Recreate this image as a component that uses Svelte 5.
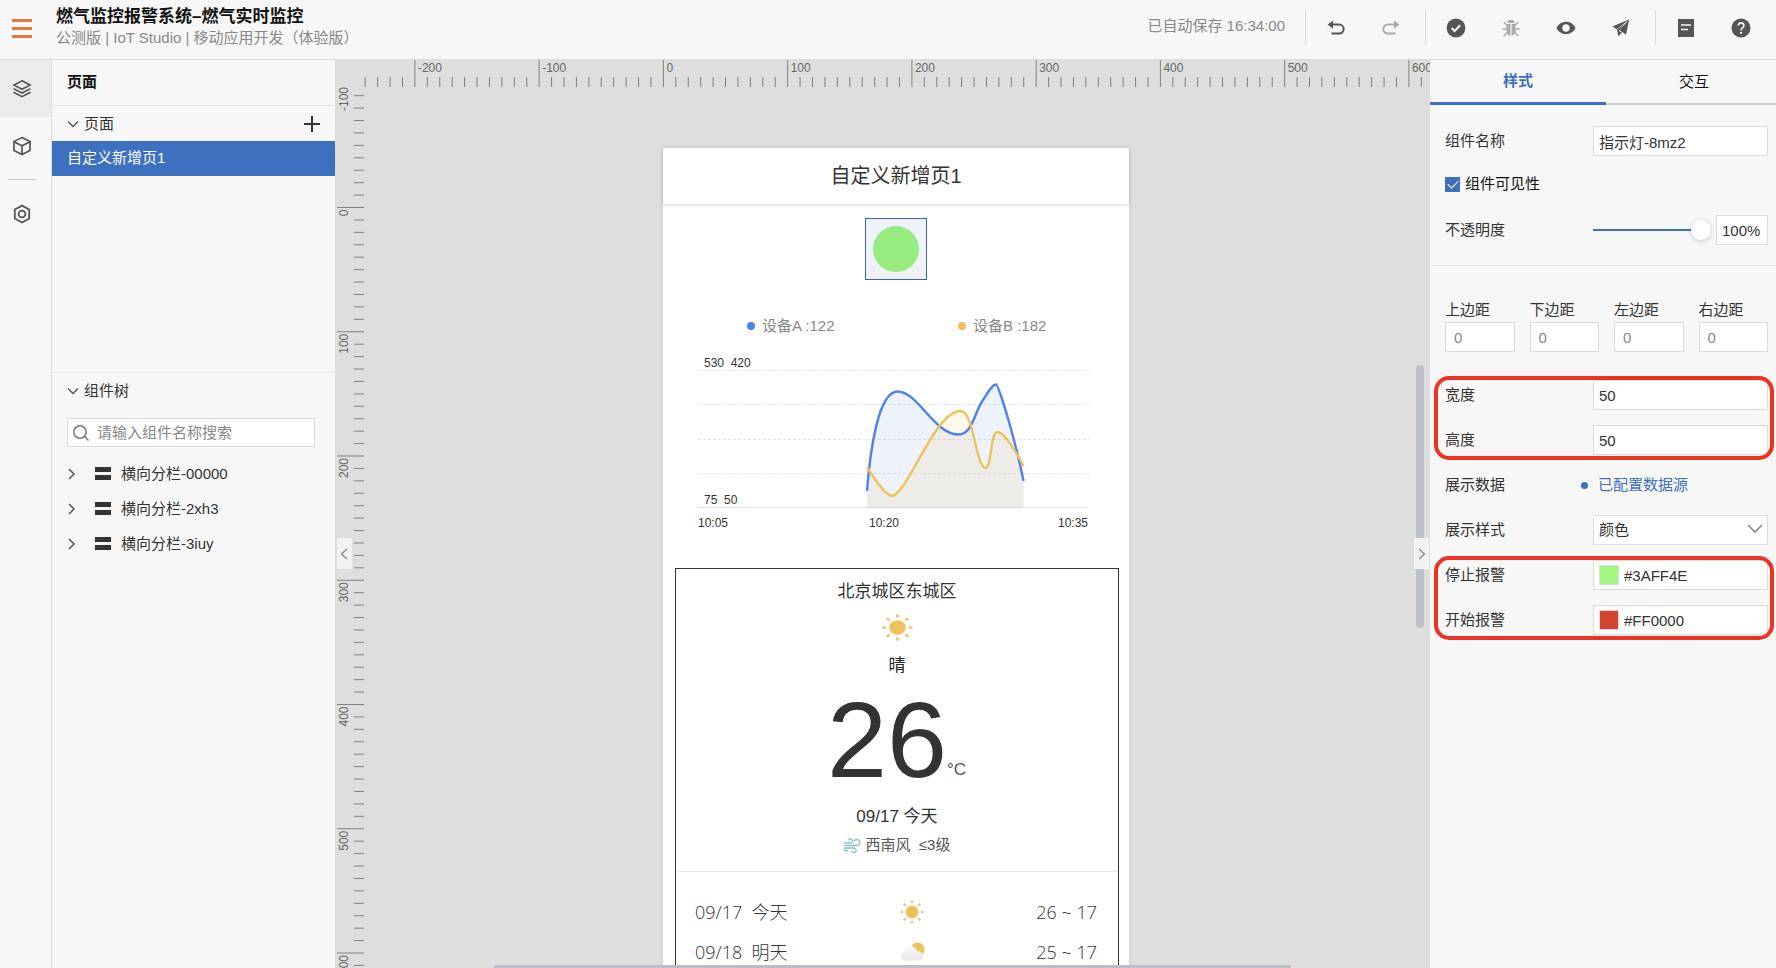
<script>
  const tree = ['横向分栏-00000', '横向分栏-2xh3', '横向分栏-3iuy'];
  const margins = ['上边距', '下边距', '左边距', '右边距'];
  const forecast = [
    { date: '09/17', day: '今天', icon: 'sun', range: '26 ~ 17' },
    { date: '09/18', day: '明天', icon: 'cloud', range: '25 ~ 17' }
  ];

  const unit = 124.25;
  function ruler(from, to, origin) {
    const ticks = [];
    for (let i = from; i <= to; i++) {
      ticks.push({ at: origin + (i * unit) / 10, major: i % 10 === 0, label: i * 10 });
    }
    return ticks;
  }
  const across = ruler(-24, 80, 298.4);
  const down = ruler(-9, 90, 147.5);
  const rays = [0, 45, 90, 135, 180, 225, 270, 315];

  let name = $state('指示灯-8mz2');
  let visible = $state(true);
  let opacity = $state(100);
  let width = $state('50');
  let height = $state('50');
  let stopColor = $state('#3AFF4E');
  let startColor = $state('#FF0000');
</script>

{#snippet sun(w, h)}
  <svg width={w} height={h} viewBox="0 0 32 32" preserveAspectRatio="none" aria-hidden="true">
    <circle cx="16" cy="16" r="8.6" fill="#edc25b" />
    {#each rays as r}
      <path d="M16 .5v3.6" stroke="#edc25b" stroke-width="2.8" transform={`rotate(${r} 16 16)`} />
    {/each}
  </svg>
{/snippet}

{#snippet chevron(d)}
  <svg class="chev" width="12" height="12" viewBox="0 0 12 12" aria-hidden="true"><path {d} fill="none" stroke="#555" stroke-width="1.5" /></svg>
{/snippet}

<div class="app">
  <header>
    <button class="menu" aria-label="菜单"><i></i><i></i><i></i></button>
    <div class="titles">
      <h1>燃气监控报警系统–燃气实时监控</h1>
      <p>公测版 | IoT Studio | 移动应用开发（体验版）</p>
    </div>
    <span class="saved">已自动保存 16:34:00</span>
    <div class="tools">
      <button aria-label="撤销"><svg width="20" height="20" viewBox="0 0 20 20"><path d="M6 6.6h7.2a4.3 4.3 0 0 1 0 8.9H5.4" fill="none" stroke="#555" stroke-width="2" /><path d="M7 2.5v8.2L1.6 6.6z" fill="#555" /></svg></button>
      <button aria-label="重做"><svg width="20" height="20" viewBox="0 0 20 20"><path d="M14 6.6H6.8a4.3 4.3 0 0 0 0 8.9h7.8" fill="none" stroke="#a9a9a9" stroke-width="2" /><path d="M13 2.5v8.2l5.4-4.1z" fill="#a9a9a9" /></svg></button>
    </div>
    <div class="tools">
      <button aria-label="检查"><svg width="20" height="20" viewBox="0 0 20 20"><circle cx="10" cy="10" r="9.4" fill="#555" /><path d="m5.6 10 3 3 5.6-5.8" fill="none" stroke="#f7f7f7" stroke-width="2" /></svg></button>
      <button aria-label="调试"><svg width="20" height="20" viewBox="0 0 20 20" fill="#a9a9a9"><path d="M6.5 5a3.5 3.2 0 0 1 7 0zM5.5 6H9.4v11.8C6.5 17 5.3 15 5.3 12zM10.6 6h3.9l.2 6c0 3-1.2 5-4.1 5.800z" /><path d="M2.800 4.200 5.800 7.200M17.200 4.200l-3 3M1.300 11H5.500M14.500 11h4.200M2.800 18l3.200-3.200M17.200 18 14 14.800" stroke="#a9a9a9" stroke-width="1.500" /></svg></button>
      <button aria-label="预览"><svg width="20" height="20" viewBox="0 0 20 20"><path d="M.5 10C4.500 1.800 15.500 1.800 19.500 10 15.500 18.200 4.500 18.200.5 10z" fill="#555" /><circle cx="10" cy="10" r="3.700" fill="#f7f7f7" /></svg></button>
      <button aria-label="发布"><svg width="20" height="20" viewBox="0 0 20 20"><path d="M18.300 1.300 1.500 8.500l4.300 2.700zM18.300 1.300 8.300 12.200l6.700 4.300z" fill="#555" /><path d="M6 11.500 14 5.500 8 12.500 11 14.800 7.300 18.300z" fill="#555" /><path d="m8.100 12.700 2 1.300" stroke="#f7f7f7" stroke-width="1" /></svg></button>
    </div>
    <div class="tools">
      <button aria-label="文档"><svg width="20" height="20" viewBox="0 0 20 20"><path d="M2 1h16v18H2z" fill="#555" /><path d="M5 7h10M5 11.500h7" stroke="#f7f7f7" stroke-width="1.600" /></svg></button>
      <button aria-label="帮助"><svg width="20" height="20" viewBox="0 0 20 20"><circle cx="10" cy="10" r="9.500" fill="#555" /><path d="M7.300 7.600C7.300 3.800 12.900 4 12.900 7.500 12.900 9.600 10.100 9.800 10.100 12.400" fill="none" stroke="#f7f7f7" stroke-width="1.700" /><circle cx="10.100" cy="14.900" r="1.100" fill="#f7f7f7" /></svg></button>
    </div>
  </header>

  <div class="body">
    <nav class="rail">
      <button class="on" aria-label="图层"><svg width="20" height="20" viewBox="0 0 20 20" fill="none" stroke="#555" stroke-width="1.600"><path d="M10 1.800 18 6.100 10 10.300 2 6.100zM1.500 9.600 10 14l8.500-4.400M1.500 13.200 10 17.700l8.500-4.500" /></svg></button>
      <button aria-label="组件"><svg width="20" height="20" viewBox="0 0 20 20" fill="none" stroke="#555" stroke-width="1.700"><path d="M10 1.600 18 5.500V14.500L10 18.500 2 14.500V5.500zM2 5.700l8 4 8-4M10 9.700v8.600" /></svg></button>
      <hr />
      <button aria-label="设置"><svg width="20" height="20" viewBox="0 0 20 20" fill="none" stroke="#555" stroke-width="1.800"><path d="M10 1.600 17.200 5.500V14.500L10 18.500 2.800 14.500V5.500z" /><circle cx="10" cy="10" r="3.400" /></svg></button>
    </nav>

    <aside class="side">
      <h2>页面</h2>
      <section class="pages">
        <div class="sub">
          {@render chevron('M1 3.500l5 5 5-5')}<span>页面</span>
          <button class="add" aria-label="新增页面"><svg width="16" height="16" viewBox="0 0 16 16"><path d="M8 0v16M0 8h16" stroke="#333" stroke-width="2" /></svg></button>
        </div>
        <a class="current" href="#page">自定义新增页1</a>
      </section>
      <section class="tree">
        <div class="sub">{@render chevron('M1 3.500l5 5 5-5')}<span>组件树</span></div>
        <label class="search">
          <svg width="18" height="18" viewBox="0 0 18 18" fill="none" stroke="#777" stroke-width="1.500"><circle cx="8" cy="8" r="6.200" /><path d="m12.500 12.500 4 4" /></svg>
          <input type="text" placeholder="请输入组件名称搜索" aria-label="搜索组件" />
        </label>
        <ul>
          {#each tree as item}
            <li>{@render chevron('M3 1l5 5-5 5')}<i class="bars"></i><span>{item}</span></li>
          {/each}
        </ul>
      </section>
    </aside>

    <main>
      <svg class="ruler-x" aria-hidden="true">
        {#each across as t}
          <path d={`M${t.at} ${t.major ? 0 : 17}V27`} />
          {#if t.major}<text x={t.at + 3} y="12">{t.label}</text>{/if}
        {/each}
      </svg>
      <svg class="ruler-y" aria-hidden="true">
        {#each down as t}
          <path d={`M${t.major ? 2 : 19} ${t.at}H29`} />
          {#if t.major}<text transform={`translate(13 ${t.at + 2}) rotate(-90)`} text-anchor="end">{t.label}</text>{/if}
        {/each}
        <text transform="translate(13 51) rotate(-90)">-100</text>
      </svg>

      <div class="stage">
        <article class="phone" id="page">
          <h3>自定义新增页1</h3>
          <div class="lamp"><i></i></div>
          <div class="legend">
            <span class="a">设备A :122</span><span class="b">设备B :182</span>
          </div>
          <svg class="chart" viewBox="0 0 466 190" role="img" aria-label="设备A 设备B">
            <path d="M35 30.500H426M35 64.500H426M35 99.500H426M35 133.500H426" stroke="#e6e6e6" stroke-dasharray="3 2" />
            <path d="M35 167.500H425" stroke="#e0e0e0" />
            <path d="M204 151C207 112 215 51.500 234.500 51.500 255 51.500 271 94.500 295.500 94.500 309 94.500 311 74 319 61.500 324 54 329 44.500 333 44.500 336 44.500 354 107 360.500 141V167.500H204z" fill="#5080ec" fill-opacity=".1" />
            <path d="M204 127C212 140 223 156 229.500 156 246 151 272 71 297.500 71 311 71 313 128 322.500 128 329 128 327 92 334.500 92 341 92 354 113 360.500 126V167.500H204z" fill="#edc25b" fill-opacity=".12" />
            <path d="M204 151C207 112 215 51.500 234.500 51.500 255 51.500 271 94.500 295.500 94.500 309 94.500 311 74 319 61.500 324 54 329 44.500 333 44.500 336 44.500 354 107 360.500 141" fill="none" stroke="#5080ec" stroke-width="2.400" />
            <path d="M204 127C212 140 223 156 229.500 156 246 151 272 71 297.500 71 311 71 313 128 322.500 128 329 128 327 92 334.500 92 341 92 354 113 360.500 126" fill="none" stroke="#edc25b" stroke-width="2.400" />
            <text x="41" y="27">530&nbsp; 420</text>
            <text x="41" y="164">75&nbsp; 50</text>
            <text x="35" y="187">10:05</text>
            <text x="206" y="187">10:20</text>
            <text x="425" y="187" text-anchor="end">10:35</text>
          </svg>

          <section class="weather">
            <div class="now">
              <p class="city">北京城区东城区</p>
              {@render sun(31, 27)}
              <p class="sky">晴</p>
              <p class="temp">26<small>°C</small></p>
              <p class="today">09/17 今天</p>
              <p class="wind">
                <svg width="17" height="15" viewBox="0 0 17 15" fill="none" stroke="#8dbfc8" stroke-width="1.300"><path d="M0 5h6.500a2 2 0 1 0-2-2.500M0 7.500h13a3 3 0 1 0-3-4M0 10h10a2.300 2.300 0 1 1-2.300 3M0 12.500h4" /></svg>
                西南风&nbsp; ≤3级
              </p>
            </div>
            {#each forecast as f}
              <div class="day">
                <span>{f.date}&nbsp; {f.day}</span>
                {#if f.icon === 'sun'}
                  {@render sun(24, 24)}
                {:else}
                  <svg width="26" height="20" viewBox="0 0 26 20" aria-hidden="true">
                    <defs><linearGradient id="cloud" x2="0" y2="1"><stop stop-color="#fafafa" /><stop offset="1" stop-color="#e8e8e8" /></linearGradient></defs>
                    <circle cx="18.500" cy="7.500" r="7" fill="#edc25b" />
                    <path d="M5.500 18.500a5 5 0 0 1-.5-9.500C6.500 2.500 16 2 18 9c8 .5 8 9.500 1.500 9.500z" fill="url(#cloud)" />
                  </svg>
                {/if}
                <span>{f.range}</span>
              </div>
            {/each}
          </section>
        </article>
      </div>
      <i class="bar-x"></i><i class="bar-y"></i>
      <button class="fold left" aria-label="收起左栏"><svg width="9" height="14" viewBox="0 0 9 14"><path d="M7 2 1.500 7 7 12" fill="none" stroke="#888" stroke-width="1.300" /></svg></button>
      <button class="fold right" aria-label="收起右栏"><svg width="9" height="14" viewBox="0 0 9 14"><path d="M2 2 7.500 7 2 12" fill="none" stroke="#888" stroke-width="1.300" /></svg></button>
    </main>

    <aside class="props">
      <div class="tabs" role="tablist">
        <button class="on" role="tab" aria-selected="true">样式</button>
        <button role="tab" aria-selected="false">交互</button>
      </div>
      <div class="basic">
        <div class="row"><label for="name">组件名称</label><input id="name" type="text" bind:value={name} /></div>
        <label class="check"><input type="checkbox" bind:checked={visible} />组件可见性</label>
        <div class="row">
          <label for="opacity">不透明度</label>
          <div class="slide">
            <input id="opacity" type="range" min="0" max="100" bind:value={opacity} />
            <input type="text" value={`${opacity}%`} aria-label="不透明度数值" />
          </div>
        </div>
      </div>
      <div class="detail">
        <div class="margins">
          {#each margins as m}
            <label>{m}<input type="text" placeholder="0" /></label>
          {/each}
        </div>
        <div class="marked">
          <div class="row"><label for="w">宽度</label><input id="w" type="text" bind:value={width} /></div>
          <div class="row"><label for="h">高度</label><input id="h" type="text" bind:value={height} /></div>
        </div>
        <div class="row"><span>展示数据</span><a class="source" href="#data">已配置数据源</a></div>
        <div class="row">
          <label for="mode">展示样式</label>
          <div class="pick">
            <select id="mode"><option>颜色</option></select>
            <svg width="16" height="10" viewBox="0 0 16 10"><path d="m1 1 7 7 7-7" fill="none" stroke="#888" stroke-width="1.600" /></svg>
          </div>
        </div>
        <div class="marked">
          <div class="row"><label for="stop">停止报警</label><div class="color"><i class="green"></i><input id="stop" type="text" bind:value={stopColor} /></div></div>
          <div class="row"><label for="start">开始报警</label><div class="color"><i class="red"></i><input id="start" type="text" bind:value={startColor} /></div></div>
        </div>
      </div>
    </aside>
  </div>
</div>

<style>
  :global(body) { margin: 0; }
  .app, .app * { box-sizing: border-box; }
  .app {
    height: 100vh; display: flex; flex-direction: column; overflow: hidden;
    background: #f7f7f7; color: #333;
    font: 15px/20px "Liberation Sans", "Noto Sans CJK SC", sans-serif;
  }
  h1, h2, h3, p, ul { margin: 0; padding: 0; }
  button { border: 0; padding: 0; background: none; font: inherit; color: inherit; cursor: pointer; }
  input, select { font: inherit; color: inherit; border: 1px solid #dcdcdc; border-radius: 0; background: #fff; min-width: 0; height: 30px; padding: 0 5px; outline: 0; margin: 0; }
  input::placeholder { color: #888; opacity: 1; }
  a { color: inherit; text-decoration: none; }
  svg { display: block; flex: none; }

  header { height: 60px; flex: none; display: flex; align-items: flex-start; border-bottom: 1px solid #dcdcdc; padding-right: 25px; }
  .menu { width: 20px; margin: 19px 24px 0 12px; display: grid; gap: 5px; }
  .menu i { height: 3px; background: #e2773f; }
  .titles { flex: 1; padding-top: 5px; white-space: nowrap; }
  h1 { font-size: 17px; line-height: 23px; color: #111; }
  .titles p { color: #888; }
  .saved { color: #888; margin-top: 16px; }
  .tools { display: flex; align-items: center; gap: 35px; height: 35px; margin: 10px 0 0 24px; padding-left: 20px; border-left: 1px solid #dcdcdc; }
  .saved + .tools { margin-left: 20px; }

  .body { flex: 1; min-height: 0; display: flex; }
  .rail { width: 52px; flex: none; border-right: 1px solid #dcdcdc; display: flex; flex-direction: column; }
  .rail button { height: 57px; padding-left: 12px; }
  .rail .on { background: #ebebeb; }
  .rail hr { width: 28px; margin: 5px 0 5px 8px; border: 0; border-top: 1px solid #c8c8c8; }

  .side { width: 283px; flex: none; display: flex; flex-direction: column; }
  h2 { font-size: 15px; line-height: 44px; padding: 0 0 1px 15px; color: #111; border-bottom: 1px solid #e8e8e8; }
  .pages { height: 267px; flex: none; border-bottom: 1px solid #e8e8e8; }
  .sub { height: 35px; display: flex; align-items: center; gap: 5px; padding: 0 15px; }
  .add { margin-left: auto; }
  .current { display: block; height: 35px; line-height: 34px; padding-left: 15px; background: #3d70bf; color: #fff; }
  .search { display: flex; align-items: center; gap: 7px; height: 29px; margin: 10px 20px 9px 15px; padding-left: 4px; border: 1px solid #dcdcdc; background: #fff; }
  .search input { flex: 1; border: 0; height: 26px; padding: 0; }
  ul { list-style: none; }
  li { display: flex; align-items: center; height: 35px; padding-left: 14px; }
  .bars { width: 16px; height: 13px; border: solid #333; border-width: 5px 0; margin: 0 10px 0 17px; }

  main { flex: 1; min-width: 0; position: relative; display: grid; grid-template: 28px 1fr / 30px 1fr; background: #dedede; overflow: hidden; }
  .ruler-x, .ruler-y { overflow: visible; font-size: 12px; fill: #666; stroke: #808080; }
  .ruler-x { grid-area: 1 / 2; width: 100%; height: 28px; }
  .ruler-y { grid-area: 1 / 1 / 3 / 2; width: 30px; height: 100%; }
  .ruler-x text, .ruler-y text { stroke: none; }
  .stage { grid-area: 2 / 2; overflow: hidden; padding: 60px 0 0 298px; }
  .phone { width: 466px; background: #fff; box-shadow: 0 0 4px #0000001a; }
  h3 { font-size: 20px; font-weight: 400; line-height: 56px; text-align: center; box-shadow: 0 1px 4px #00000026; }
  .lamp { width: 62px; height: 62px; margin: 14px auto 0; padding: 7px; border: 1px solid #2f66b8; background: #eff3f9; }
  .lamp i { display: block; height: 46px; border-radius: 50%; background: #97ec7f; }
  .legend { display: grid; grid-template-columns: 211px 1fr; padding: 36px 0 0 84px; color: #888; }
  .legend span { display: flex; align-items: center; gap: 7px; }
  .legend span::before { content: ""; width: 8px; height: 8px; border-radius: 50%; background: #5080ec; }
  .legend .b::before { background: #edc25b; }
  .chart { width: 100%; height: 190px; margin-top: 4px; font-size: 12px; fill: #333; }
  .weather { margin: 38px 10px 0 12px; border: 1px solid #333; height: 480px; font-size: 17px; line-height: 24px; }
  .now { display: flex; flex-direction: column; align-items: center; border-bottom: 1px solid #e8e8e8; height: 303px; padding-top: 11px; }
  .now svg { margin-top: 10px; }
  .sky { margin-top: 13px; color: #222; }
  .temp { position: relative; margin-top: 2px; font-size: 108px; line-height: 120px; padding-right: 20px; }
  .temp small { position: absolute; right: 1px; bottom: 18px; font-size: 17px; line-height: 24px; color: #555; }
  .today { margin-top: 5px; }
  .now .wind { display: flex; align-items: center; gap: 5px; margin-top: 4px; font-size: 15px; color: #555; }
  .now .wind svg { margin: 0; }
  .day { display: flex; justify-content: space-between; align-items: center; height: 40px; padding: 0 21px 0 19px; font: 300 18px/24px "Open Sans", "Noto Sans CJK SC", sans-serif; }
  .now + .day { margin-top: 20px; }

  .bar-x { position: absolute; bottom: 0; left: 159px; right: 139px; height: 3px; border-radius: 3px 3px 0 0; background: #b9bdc5; }
  .bar-y { position: absolute; top: 305px; right: 6px; width: 8px; height: 263px; border-radius: 4px; background: #bdc1c8; }
  .fold { position: absolute; top: 478px; width: 15px; height: 31px; background: #f2f2f2; display: grid; place-items: center; }
  .left { left: 2px; }
  .right { right: 1px; }

  .props { width: 346px; flex: none; overflow: hidden; }
  .tabs { display: grid; grid-template-columns: 176px 176px; height: 45px; }
  .tabs button { color: #111; border-bottom: 2px solid #cfcfcf; }
  .tabs .on { color: #3d70bf; font-weight: 700; border-bottom: 3px solid #3d70bf; }
  .basic { height: 161px; padding: 21px 8px 0 15px; border-bottom: 1px solid #e6e6e6; }
  .row { display: grid; grid-template-columns: 148px minmax(0, 1fr); align-items: center; height: 30px; }
  .check { display: flex; align-items: center; gap: 5px; height: 30px; margin: 13px 0 16px; color: #111; }
  .check input { appearance: none; width: 15px; height: 15px; padding: 0; border: 0; background: #3d70bf; display: grid; place-items: center; }
  .check input:checked::after { content: ""; width: 9px; height: 5px; border: solid #fff; border-width: 0 0 1px 1px; transform: translateY(-1px) rotate(-45deg); }
  .slide { display: grid; grid-template-columns: minmax(0, 1fr) 52px; gap: 5px; }
  input[type="range"] { appearance: none; width: 100%; padding: 0; border: 0; background: linear-gradient(#3d70bf, #3d70bf) left center / 90% 2px no-repeat; }
  input[type="range"]::-webkit-slider-thumb { appearance: none; width: 20px; height: 20px; border-radius: 50%; background: #fff; box-shadow: 0 1px 5px #00000033; }
  .detail { padding: 34px 8px 0 15px; display: grid; grid-template-columns: minmax(0, 1fr); gap: 15px; }
  .margins { display: grid; grid-template-columns: repeat(4, minmax(0, 1fr)); gap: 15px; margin-bottom: 13px; }
  .margins input { display: block; width: 100%; margin-top: 2px; padding-left: 8px; }
  .marked { position: relative; display: grid; grid-template-columns: minmax(0, 1fr); gap: 15px; }
  .marked::after { content: ""; position: absolute; inset: -4px -6px -5px -11px; border: 4px solid #ea3323; border-radius: 15px; pointer-events: none; }
  .source { display: flex; align-items: center; gap: 10px; margin-left: -12px; color: #3d70bf; }
  .source::before { content: ""; width: 7px; height: 7px; border-radius: 50%; background: #3d70bf; }
  .pick { position: relative; }
  .pick select { appearance: none; width: 100%; display: block; }
  .pick svg { position: absolute; right: 5px; top: 9px; pointer-events: none; }
  .color { display: flex; align-items: center; gap: 5px; height: 30px; padding-left: 5px; border: 1px solid #dcdcdc; background: #fff; }
  .color i { width: 20px; height: 20px; border: 1px solid #dcdcdc; }
  .color input { flex: 1; border: 0; height: 26px; padding: 0; }
  .green { background: #a1f77f; }
  .red { background: #d64330; }
</style>
